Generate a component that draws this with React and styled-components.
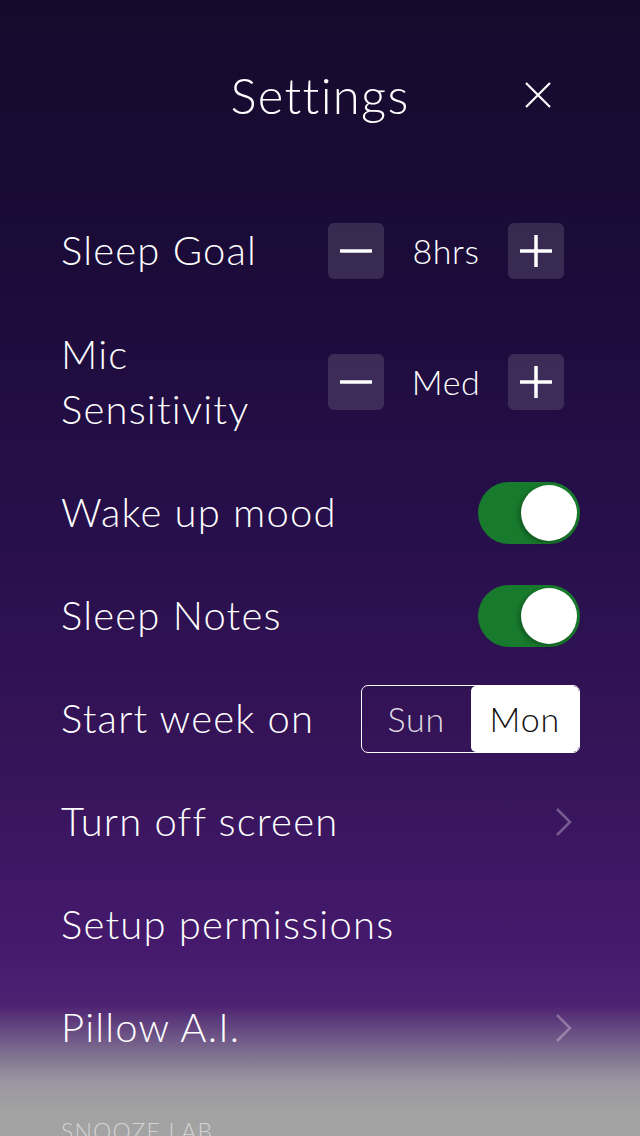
import React from 'react';
import styled, { createGlobalStyle } from 'styled-components';

const GlobalStyle = createGlobalStyle`
  html, body {
    margin: 0;
    padding: 0;
    background: #a0a0a0;
  }
  body {
    font-family: Lato, "Open Sans", sans-serif;
  }
`;

const Screen = styled.div`
  width: 640px;
  height: 1136px;
  overflow: hidden;
  color: #fff;
  background: linear-gradient(
    180deg,
    #160a2c 0px,
    #1b0b38 250px,
    #260f4a 520px,
    #361459 760px,
    #461a6e 960px,
    #4e2272 1005px,
    #7a6a8e 1050px,
    #9a95a0 1080px,
    #a2a2a2 1110px,
    #a3a3a3 1136px
  );
  display: flex;
  flex-direction: column;
`;

const Header = styled.div`
  flex-shrink: 0;
  height: 199px;
  display: flex;
  justify-content: center;
  align-items: flex-start;
  position: relative;
  box-sizing: border-box;
  padding-top: 62px;
`;

const Title = styled.h1`
  margin: 0;
  font-size: 49px;
  font-weight: 300;
  letter-spacing: 1.3px;
  line-height: 66px;
`;

const CloseButton = styled.div`
  position: absolute;
  right: 87px;
  top: 80px;
  width: 30px;
  height: 30px;
`;

const List = styled.div`
  flex-shrink: 0;
  display: flex;
  flex-direction: column;
  padding: 0 60px 0 61px;
`;

const Row = styled.div`
  flex-shrink: 0;
  display: flex;
  align-items: center;
  justify-content: space-between;
  height: ${(p) => p.$h || 103}px;
`;

const Label = styled.div`
  font-size: 40px;
  font-weight: 300;
  letter-spacing: 1.2px;
  line-height: 55px;
`;

const Stepper = styled.div`
  display: flex;
  align-items: center;
  margin-right: 16px;
`;

const StepButton = styled.div`
  width: 56px;
  height: 56px;
  border-radius: 6px;
  background: rgba(255, 255, 255, 0.13);
  display: flex;
  align-items: center;
  justify-content: center;
`;

const StepValue = styled.div`
  width: 124px;
  text-align: center;
  font-size: 34px;
  font-weight: 300;
  letter-spacing: 0.6px;
`;

const Toggle = styled.div`
  width: 102px;
  height: 62px;
  border-radius: 31px;
  background: #187a2c;
  position: relative;
`;

const Knob = styled.div`
  position: absolute;
  right: 3px;
  top: 3px;
  width: 56px;
  height: 56px;
  border-radius: 50%;
  background: #fff;
  box-shadow: -2px 2px 5px rgba(0, 0, 0, 0.3);
`;

const Segmented = styled.div`
  display: flex;
  width: 219px;
  height: 68px;
  box-sizing: border-box;
  border: 1.5px solid #fff;
  border-radius: 7px;
  overflow: hidden;
`;

const Segment = styled.div`
  flex: 1;
  display: flex;
  align-items: center;
  justify-content: center;
  font-size: 34px;
  font-weight: 300;
  letter-spacing: 0.8px;
  background: ${(p) => (p.$active ? '#fff' : 'transparent')};
  color: ${(p) => (p.$active ? '#111' : 'rgba(255,255,255,0.85)')};
  border-radius: ${(p) => (p.$active ? '5px' : '0')};
`;

const Chevron = styled.svg`
  width: 20px;
  height: 32px;
  margin-right: 6px;
`;

const SectionTitle = styled.div`
  margin-top: 38px;
  font-size: 23px;
  letter-spacing: 1.2px;
  color: rgba(255, 255, 255, 0.55);
  font-weight: 300;
`;

function Minus() {
  return (
    <svg width="32" height="32" viewBox="0 0 32 32">
      <path d="M0 16 H32" stroke="#fff" strokeWidth="3.5" />
    </svg>
  );
}

function Plus() {
  return (
    <svg width="32" height="32" viewBox="0 0 32 32">
      <path d="M0 16 H32 M16 0 V32" stroke="#fff" strokeWidth="3.5" />
    </svg>
  );
}

function StepControl({ value }) {
  return (
    <Stepper>
      <StepButton><Minus /></StepButton>
      <StepValue>{value}</StepValue>
      <StepButton><Plus /></StepButton>
    </Stepper>
  );
}

function Switch() {
  return (
    <Toggle>
      <Knob />
    </Toggle>
  );
}

function Arrow() {
  return (
    <Chevron viewBox="0 0 20 32">
      <path d="M3 3 L16 16 L3 29" fill="none" stroke="rgba(255,255,255,0.3)" strokeWidth="2.5" />
    </Chevron>
  );
}

export default function App() {
  return (
    <>
      <GlobalStyle />
      <Screen>
        <Header>
          <Title>Settings</Title>
          <CloseButton>
            <svg width="30" height="30" viewBox="0 0 30 30">
              <path d="M3 3 L27 27 M27 3 L3 27" stroke="#fff" strokeWidth="2.2" />
            </svg>
          </CloseButton>
        </Header>
        <List>
          <Row>
            <Label>Sleep Goal</Label>
            <StepControl value="8hrs" />
          </Row>
          <Row $h={159}>
            <Label>Mic<br />Sensitivity</Label>
            <StepControl value="Med" />
          </Row>
          <Row>
            <Label>Wake up mood</Label>
            <Switch />
          </Row>
          <Row>
            <Label>Sleep Notes</Label>
            <Switch />
          </Row>
          <Row>
            <Label>Start week on</Label>
            <Segmented>
              <Segment>Sun</Segment>
              <Segment $active>Mon</Segment>
            </Segmented>
          </Row>
          <Row>
            <Label>Turn off screen</Label>
            <Arrow />
          </Row>
          <Row>
            <Label>Setup permissions</Label>
          </Row>
          <Row>
            <Label>Pillow A.I.</Label>
            <Arrow />
          </Row>
          <SectionTitle>SNOOZE LAB</SectionTitle>
        </List>
      </Screen>
    </>
  );
}
